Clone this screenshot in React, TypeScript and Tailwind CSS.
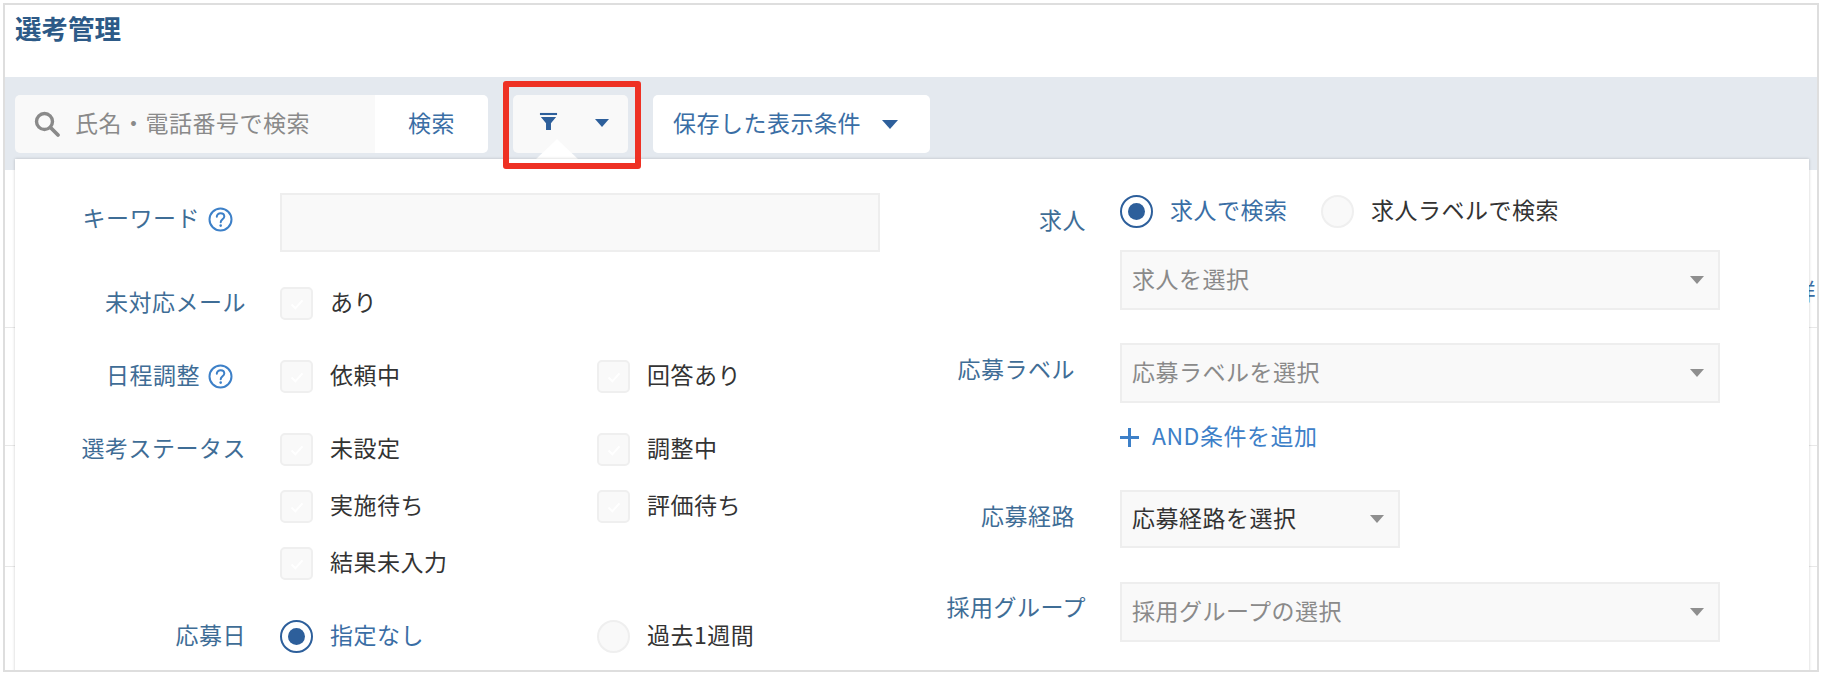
import React from "react";

const font = { fontFamily: '"Noto Sans CJK JP", "Noto Sans", sans-serif' };

function Help() {
  return (
    <svg width="25" height="25" viewBox="0 0 25 25" fill="none" className="shrink-0">
      <circle cx="12.5" cy="12.5" r="11" stroke="#3d80c8" strokeWidth="2" />
      <path d="M8.8 9.8c0-2.2 1.7-3.6 3.8-3.6s3.7 1.3 3.7 3.3c0 2.8-3.6 2.9-3.6 5.8" stroke="#3d80c8" strokeWidth="2" strokeLinecap="round" />
      <circle cx="12.7" cy="18.6" r="1.3" fill="#3d80c8" />
    </svg>
  );
}

function Check({ label }: { label: string }) {
  return (
    <div className="flex items-center w-[317px] h-[33px]">
      <span className="flex items-center justify-center w-[33px] h-[33px] rounded-[5px] border-2 border-[#efefef] bg-[#f9f9f9]">
        <svg width="18" height="18" viewBox="0 0 18 18" fill="none">
          <path d="M3.5 9.5l3.8 3.8 7.2-8" stroke="#ffffff" strokeWidth="2" />
        </svg>
      </span>
      <span className="ml-[17px] pb-[4px] text-[#333]">{label}</span>
    </div>
  );
}

function Radio({ label, on, w }: { label: string; on?: boolean; w?: string }) {
  return (
    <div className={`flex items-center h-[33px] ${w ?? ""}`}>
      {on ? (
        <span className="flex items-center justify-center w-[33px] h-[33px] rounded-full border-2 border-[#2d5f9b] bg-white">
          <span className="w-[17px] h-[17px] rounded-full bg-[#2d5f9b]" />
        </span>
      ) : (
        <span className="w-[33px] h-[33px] rounded-full border-2 border-[#efefef] bg-[#f9f9f9]" />
      )}
      <span className={`ml-[17px] pb-[4px] ${on ? "text-[#3a6ea5]" : "text-[#333]"}`}>{label}</span>
    </div>
  );
}

function Caret({ color, size = "w-[16px] h-[9px]" }: { color: string; size?: string }) {
  return (
    <svg viewBox="0 0 16 9" className={size}>
      <path d="M0 0h16L8 9z" fill={color} />
    </svg>
  );
}

function Select({ label, width, dark }: { label: string; width: string; dark?: boolean }) {
  return (
    <div className={`flex items-center justify-between ${width} h-[60px] pl-[10px] pr-[14px] bg-[#f9f9f9] border-2 border-[#eeeeee]`}>
      <span className={`pb-[4px] ${dark ? "text-[#333]" : "text-[#8a8a8a]"}`}>{label}</span>
      <Caret color="#8f8f8f" size="w-[14px] h-[10px]" />
    </div>
  );
}

function Label({ children, w = "w-[196px]" }: { children: React.ReactNode; w?: string }) {
  return <div className={`${w} shrink-0 flex items-center justify-end gap-[8px] text-[#3f6d96]`}>{children}</div>;
}

export default function App() {
  return (
    <div className="w-[1826px] h-[676px] bg-white pt-[3px] pl-[3px]" style={font}>
      <div className="relative w-[1816px] h-[669px] border-2 border-[#dedede] overflow-hidden text-[23px] leading-[33px] tracking-[0.5px]">
        <h1 className="h-[72px] pl-[10px] pt-[5px] text-[26.5px] leading-[36px] font-bold text-[#2d5a87] tracking-normal">選考管理</h1>

        <div className="h-[93px] bg-[#e4e9ef] pt-[18px] pl-[10px] flex items-start gap-[25px]">
          <div className="flex h-[58px] w-[473px] rounded-[5px] overflow-hidden">
            <div className="flex items-center w-[360px] bg-[#f9f9f9] pl-[18px] text-[#8a8a8a]">
              <svg width="28" height="28" viewBox="0 0 28 28" fill="none">
                <circle cx="11.5" cy="11.5" r="8" stroke="#8a8a8a" strokeWidth="3.4" />
                <path d="M17.5 17.5L25 25" stroke="#8a8a8a" strokeWidth="3.8" strokeLinecap="round" />
              </svg>
              <span className="ml-[14px] pb-[4px]">氏名・電話番号で検索</span>
            </div>
            <div className="flex-1 bg-white flex items-center justify-center text-[#3a6ea5]">
              <span className="pb-[4px]">検索</span>
            </div>
          </div>

          <div className="relative flex items-center h-[58px] w-[115px] bg-[#f9f9f9] rounded-[5px] pl-[26px]">
            <svg width="19" height="19" viewBox="0 0 20 20" className="mb-[6px]">
              <path d="M1 1h18v2.2H1z" fill="#2d5f9b" />
              <path d="M2 5.2h16l-5.4 6.6V19H7.4v-7.2z" fill="#2d5f9b" />
            </svg>
            <span className="ml-[37px] mb-[2px]">
              <Caret color="#2d5f9b" size="w-[14px] h-[8px]" />
            </span>
            <svg width="44" height="21" viewBox="0 0 44 21" className="absolute left-[22px] top-[44px]">
              <path d="M22 0L44 21H0z" fill="#ffffff" />
            </svg>
          </div>

          <div className="flex items-center h-[58px] w-[277px] bg-white rounded-[5px] pl-[20px] text-[#3a6ea5]">
            <span className="pb-[4px]">保存した表示条件</span>
            <span className="ml-[21px]">
              <Caret color="#2d5f9b" />
            </span>
          </div>
        </div>

        <div className="h-[158px] pt-[104px] flex justify-end border-b border-[#e8e8e8] text-[#3a6ea5]">
          <span className="pr-[1px]">詳</span>
        </div>
        <div className="h-[118px] border-b border-[#e8e8e8]" />
        <div className="h-[121px] border-b border-[#e8e8e8]" />

        {/* 検索条件のポップオーバー */}
        <div className="absolute left-[10px] top-[154px] w-[1794px] h-[520px] bg-white shadow-[0_0_3px_rgba(0,0,0,0.2)] flex">
          <div className="w-[1027px] pt-[34px] flex flex-col">
            <div className="flex">
              <Label w="w-[218px]">
                <div className="flex items-center gap-[8px] pb-[7px]">
                  <span className="pb-[4px]">キーワード</span>
                  <Help />
                </div>
              </Label>
              <div className="ml-[47px] w-[600px] h-[59px] bg-[#f9f9f9] border-2 border-[#eeeeee]" />
            </div>
            <div className="flex mt-[35px]">
              <Label w="w-[231px]"><span className="pb-[4px] leading-[29px]">未対応メール</span></Label>
              <div className="ml-[34px]"><Check label="あり" /></div>
            </div>
            <div className="flex mt-[40px]">
              <Label w="w-[218px]"><span className="pb-[4px] leading-[29px]">日程調整</span><Help /></Label>
              <div className="ml-[47px] flex"><Check label="依頼中" /><Check label="回答あり" /></div>
            </div>
            <div className="flex mt-[40px]">
              <Label w="w-[231px]"><span className="self-start -mt-[2px]">選考ステータス</span></Label>
              <div className="ml-[34px] grid grid-cols-[317px_317px] gap-y-[24px]">
                <Check label="未設定" />
                <Check label="調整中" />
                <Check label="実施待ち" />
                <Check label="評価待ち" />
                <Check label="結果未入力" />
              </div>
            </div>
            <div className="flex mt-[40px]">
              <Label w="w-[231px]"><span className="pb-[4px] leading-[29px]">応募日</span></Label>
              <div className="ml-[34px] flex">
                <Radio label="指定なし" on w="w-[317px]" />
                <Radio label="過去1週間" />
              </div>
            </div>
          </div>

          <div className="flex-1 pt-[36px] flex flex-col">
            <div className="flex">
              <Label w="w-[44px]"><span className="self-start mt-[8px] whitespace-nowrap">求人</span></Label>
              <div className="ml-[34px] flex flex-col">
                <div className="flex">
                  <Radio label="求人で検索" on w="w-[201px]" />
                  <Radio label="求人ラベルで検索" />
                </div>
                <div className="mt-[22px]"><Select label="求人を選択" width="w-[600px]" /></div>
              </div>
            </div>
            <div className="flex mt-[33px] -ml-[100px]">
              <Label w="w-[144px]"><span className="self-start mt-[9px] mr-[11px] whitespace-nowrap">応募ラベル</span></Label>
              <div className="ml-[34px] flex flex-col">
                <Select label="応募ラベルを選択" width="w-[600px]" />
                <div className="mt-[18px] h-[33px] flex items-center text-[#3d80c8]">
                  <svg width="19" height="19" viewBox="0 0 19 19" className="shrink-0">
                    <path d="M9.5 0v19M0 9.5h19" stroke="#3d80c8" strokeWidth="3" />
                  </svg>
                  <span className="ml-[13px] pb-[4px] leading-[29px]">AND条件を追加</span>
                </div>
              </div>
            </div>
            <div className="flex mt-[36px]">
              <Label w="w-[44px]"><span className="self-start mt-[9px] mr-[11px] whitespace-nowrap">応募経路</span></Label>
              <div className="ml-[34px]"><Select label="応募経路を選択" width="w-[280px] !h-[58px]" dark /></div>
            </div>
            <div className="flex mt-[34px] -ml-[100px]">
              <Label w="w-[144px]"><span className="self-start mt-[8px] whitespace-nowrap">採用グループ</span></Label>
              <div className="ml-[34px]"><Select label="採用グループの選択" width="w-[600px]" /></div>
            </div>
          </div>
        </div>

        {/* 赤い注釈枠 */}
        <div className="absolute left-[498px] top-[76px] w-[138px] h-[88px] border-[6px] border-[#ee3124] rounded-[3px]" />
      </div>
    </div>
  );
}
